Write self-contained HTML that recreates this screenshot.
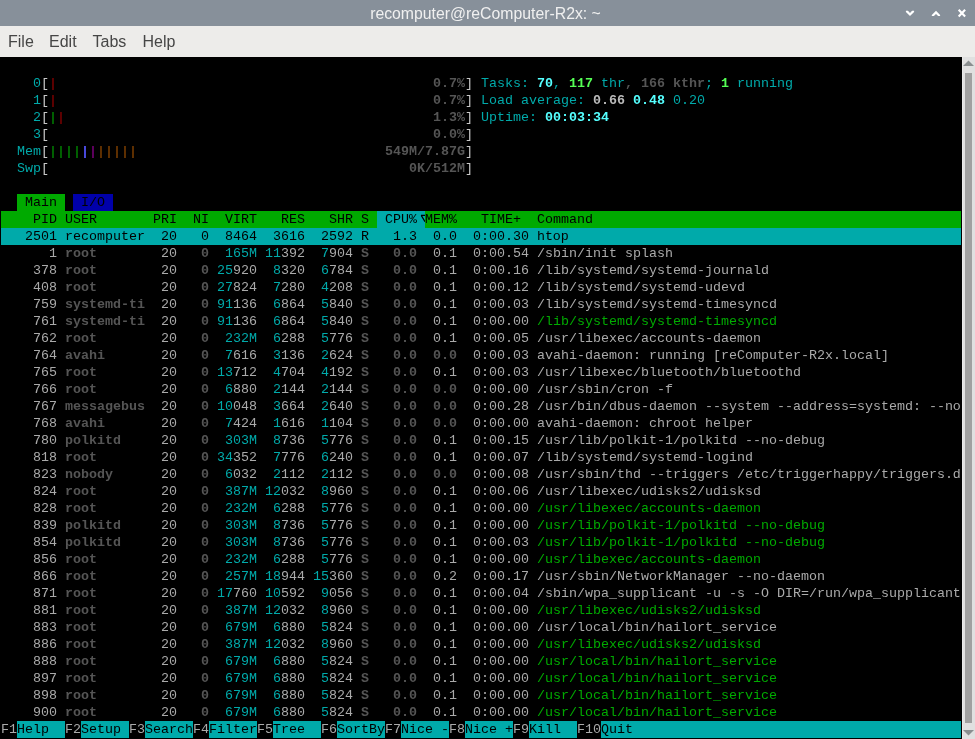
<!DOCTYPE html>
<html><head><meta charset="utf-8">
<style>
html,body{margin:0;padding:0;}
body{width:975px;height:739px;position:relative;overflow:hidden;background:#000;}
#wrap{position:absolute;left:0;top:0;width:975px;height:739px;will-change:transform;}
#title{position:absolute;left:0;top:0;width:975px;height:26px;background:#87909a;}
#title .t{position:absolute;left:-2px;width:975px;top:1px;height:26px;line-height:26px;text-align:center;color:#f0f0f0;font-family:"Liberation Sans",sans-serif;font-size:15.8px;}
#menu{position:absolute;left:0;top:26px;width:975px;height:31px;background:#edecea;font-family:"Liberation Sans",sans-serif;font-size:16px;color:#464646;}
#menu span{position:absolute;top:0px;line-height:31px;}
#term{position:absolute;left:0;top:57px;width:962px;height:682px;background:#000;}
#sb{position:absolute;left:962px;top:57px;width:13px;height:682px;background:#e0e0e0;border-left:1px solid #e8e8e8;box-sizing:border-box;}
#rows{position:absolute;left:0;top:0;width:962px;height:739px;will-change:transform;}
.r{position:absolute;left:1px;height:17px;line-height:17px;white-space:pre;font-family:"Liberation Mono",monospace;font-size:13.3333px;color:#aaaaaa;}
.w{color:#aaaaaa}
.W{color:#ffffff;font-weight:bold}
.br{color:#c8c8c8}
.Wg{color:#bbbbbb;font-weight:bold}
.r span{display:inline-block;height:17px;vertical-align:top}
.r span.tri{width:8px;overflow:visible;font-family:"Liberation Sans",sans-serif}
.k{color:#555555;font-weight:bold}
.c{color:#00aaaa}
.C{color:#55ffff;font-weight:bold}
.g{color:#00aa00}
.G{color:#55ff55;font-weight:bold}

.rd{color:#aa0000}
.B{color:#5555ff;font-weight:bold}
.m{color:#aa00aa}
.y{color:#aa5500}
.bg{background:#00aa00;color:#000}
.bc{background:#00aaaa;color:#000}
.bb{background:#0000aa;color:#000}
</style></head><body><div id="wrap">
<div id="title"><div class="t">recomputer@reComputer-R2x: ~</div>
<svg style="position:absolute;left:0;top:0" width="975" height="26">
<polygon points="905.9,10.8 907.9,10.8 910,12.9 912.1,10.8 914.1,10.8 914.1,12 910,16 905.9,11.9" fill="#fff"/>
<polygon points="931.8,16 933.9,16 936,13.9 938.1,16 940.1,16 940.1,14.9 936,10.8 931.8,14.9" fill="#fff"/>
<path d="M959.4 10.5 L964.4 15.7 M964.4 10.5 L959.4 15.7" stroke="#fff" stroke-width="2.1" stroke-linecap="square" fill="none"/>
</svg></div>
<div id="menu"><span style="left:8px">File</span><span style="left:49px">Edit</span><span style="left:92.5px">Tabs</span><span style="left:142.5px">Help</span></div>
<div id="term">
</div>
<div id="rows">
<div class="r" style="top:75px"><span class="c">    0</span><span class="br">[</span><span class="rd">|</span><span class="w">                                               </span><span class="k">0.7%</span><span class="br">]</span><span class="w"> </span><span class="c">Tasks: </span><span class="C">70</span><span class="c">, </span><span class="G">117</span><span class="c"> thr</span><span class="k">, 166 kthr</span><span class="c">; </span><span class="G">1</span><span class="c"> running</span></div>
<div class="r" style="top:92px"><span class="c">    1</span><span class="br">[</span><span class="rd">|</span><span class="w">                                               </span><span class="k">0.7%</span><span class="br">]</span><span class="w"> </span><span class="c">Load average: </span><span class="Wg">0.66 </span><span class="C">0.48 </span><span class="c">0.20</span></div>
<div class="r" style="top:109px"><span class="c">    2</span><span class="br">[</span><span class="g">|</span><span class="rd">|</span><span class="w">                                              </span><span class="k">1.3%</span><span class="br">]</span><span class="w"> </span><span class="c">Uptime: </span><span class="C">00:03:34</span></div>
<div class="r" style="top:126px"><span class="c">    3</span><span class="br">[</span><span class="w">                                                </span><span class="k">0.0%</span><span class="br">]</span><span class="w"> </span></div>
<div class="r" style="top:143px"><span class="c">  Mem</span><span class="br">[</span><span class="g">||||</span><span class="B">|</span><span class="m">|</span><span class="y">|||||</span><span class="w">                               </span><span class="k">549M/7.87G</span><span class="br">]</span><span class="w"> </span></div>
<div class="r" style="top:160px"><span class="c">  Swp</span><span class="br">[</span><span class="w">                                             </span><span class="k">0K/512M</span><span class="br">]</span><span class="w"> </span></div>
<div class="r" style="top:194px"><span class="w">  </span><span class="bg"> Main </span><span class="w"> </span><span class="bb"> I/O </span></div>
<div class="r" style="top:211px"><span class="bg">    PID USER       PRI  NI  VIRT   RES   SHR S </span><span class="bc"> CPU%</span><span class="bc tri"><svg width="8" height="17" style="display:block"><path d="M4 4.4 L8 4.4 M4.2 4.4 L8 10.8" stroke="#000" stroke-width="1.2" fill="none"/></svg></span><span class="bg">MEM%   TIME+  Command                                              </span></div>
<div class="r" style="top:228px"><span class="bc">   2501 recomputer  20   0  8464  3616  2592 R   1.3  0.0  0:00.30 htop                                                 </span></div>
<div class="r" style="top:245px"><span class="w">      1 </span><span class="k">root      </span><span class="w">  20 </span><span class="k">  0</span><span class="w"> </span><span class="w"> </span><span class="c">165M</span><span class="w"> </span><span class="c">11</span><span class="w">392</span><span class="w"> </span><span class="w"> </span><span class="c">7</span><span class="w">904</span><span class="w"> </span><span class="k">S</span><span class="w"> </span><span class="k">  0.0</span><span class="w"> </span><span class="w"> 0.1</span><span class="w"> </span><span class="w"> 0:00.54 </span><span class="w">/sbin/init splash</span></div>
<div class="r" style="top:262px"><span class="w">    378 </span><span class="k">root      </span><span class="w">  20 </span><span class="k">  0</span><span class="w"> </span><span class="c">25</span><span class="w">920</span><span class="w"> </span><span class="w"> </span><span class="c">8</span><span class="w">320</span><span class="w"> </span><span class="w"> </span><span class="c">6</span><span class="w">784</span><span class="w"> </span><span class="k">S</span><span class="w"> </span><span class="k">  0.0</span><span class="w"> </span><span class="w"> 0.1</span><span class="w"> </span><span class="w"> 0:00.16 </span><span class="w">/lib/systemd/systemd-journald</span></div>
<div class="r" style="top:279px"><span class="w">    408 </span><span class="k">root      </span><span class="w">  20 </span><span class="k">  0</span><span class="w"> </span><span class="c">27</span><span class="w">824</span><span class="w"> </span><span class="w"> </span><span class="c">7</span><span class="w">280</span><span class="w"> </span><span class="w"> </span><span class="c">4</span><span class="w">208</span><span class="w"> </span><span class="k">S</span><span class="w"> </span><span class="k">  0.0</span><span class="w"> </span><span class="w"> 0.1</span><span class="w"> </span><span class="w"> 0:00.12 </span><span class="w">/lib/systemd/systemd-udevd</span></div>
<div class="r" style="top:296px"><span class="w">    759 </span><span class="k">systemd-ti</span><span class="w">  20 </span><span class="k">  0</span><span class="w"> </span><span class="c">91</span><span class="w">136</span><span class="w"> </span><span class="w"> </span><span class="c">6</span><span class="w">864</span><span class="w"> </span><span class="w"> </span><span class="c">5</span><span class="w">840</span><span class="w"> </span><span class="k">S</span><span class="w"> </span><span class="k">  0.0</span><span class="w"> </span><span class="w"> 0.1</span><span class="w"> </span><span class="w"> 0:00.03 </span><span class="w">/lib/systemd/systemd-timesyncd</span></div>
<div class="r" style="top:313px"><span class="w">    761 </span><span class="k">systemd-ti</span><span class="w">  20 </span><span class="k">  0</span><span class="w"> </span><span class="c">91</span><span class="w">136</span><span class="w"> </span><span class="w"> </span><span class="c">6</span><span class="w">864</span><span class="w"> </span><span class="w"> </span><span class="c">5</span><span class="w">840</span><span class="w"> </span><span class="k">S</span><span class="w"> </span><span class="k">  0.0</span><span class="w"> </span><span class="w"> 0.1</span><span class="w"> </span><span class="w"> 0:00.00 </span><span class="g">/lib/systemd/systemd-timesyncd</span></div>
<div class="r" style="top:330px"><span class="w">    762 </span><span class="k">root      </span><span class="w">  20 </span><span class="k">  0</span><span class="w"> </span><span class="w"> </span><span class="c">232M</span><span class="w"> </span><span class="w"> </span><span class="c">6</span><span class="w">288</span><span class="w"> </span><span class="w"> </span><span class="c">5</span><span class="w">776</span><span class="w"> </span><span class="k">S</span><span class="w"> </span><span class="k">  0.0</span><span class="w"> </span><span class="w"> 0.1</span><span class="w"> </span><span class="w"> 0:00.05 </span><span class="w">/usr/libexec/accounts-daemon</span></div>
<div class="r" style="top:347px"><span class="w">    764 </span><span class="k">avahi     </span><span class="w">  20 </span><span class="k">  0</span><span class="w"> </span><span class="w"> </span><span class="c">7</span><span class="w">616</span><span class="w"> </span><span class="w"> </span><span class="c">3</span><span class="w">136</span><span class="w"> </span><span class="w"> </span><span class="c">2</span><span class="w">624</span><span class="w"> </span><span class="k">S</span><span class="w"> </span><span class="k">  0.0</span><span class="w"> </span><span class="k"> 0.0</span><span class="w"> </span><span class="w"> 0:00.03 </span><span class="w">avahi-daemon: running [reComputer-R2x.local]</span></div>
<div class="r" style="top:364px"><span class="w">    765 </span><span class="k">root      </span><span class="w">  20 </span><span class="k">  0</span><span class="w"> </span><span class="c">13</span><span class="w">712</span><span class="w"> </span><span class="w"> </span><span class="c">4</span><span class="w">704</span><span class="w"> </span><span class="w"> </span><span class="c">4</span><span class="w">192</span><span class="w"> </span><span class="k">S</span><span class="w"> </span><span class="k">  0.0</span><span class="w"> </span><span class="w"> 0.1</span><span class="w"> </span><span class="w"> 0:00.03 </span><span class="w">/usr/libexec/bluetooth/bluetoothd</span></div>
<div class="r" style="top:381px"><span class="w">    766 </span><span class="k">root      </span><span class="w">  20 </span><span class="k">  0</span><span class="w"> </span><span class="w"> </span><span class="c">6</span><span class="w">880</span><span class="w"> </span><span class="w"> </span><span class="c">2</span><span class="w">144</span><span class="w"> </span><span class="w"> </span><span class="c">2</span><span class="w">144</span><span class="w"> </span><span class="k">S</span><span class="w"> </span><span class="k">  0.0</span><span class="w"> </span><span class="k"> 0.0</span><span class="w"> </span><span class="w"> 0:00.00 </span><span class="w">/usr/sbin/cron -f</span></div>
<div class="r" style="top:398px"><span class="w">    767 </span><span class="k">messagebus</span><span class="w">  20 </span><span class="k">  0</span><span class="w"> </span><span class="c">10</span><span class="w">048</span><span class="w"> </span><span class="w"> </span><span class="c">3</span><span class="w">664</span><span class="w"> </span><span class="w"> </span><span class="c">2</span><span class="w">640</span><span class="w"> </span><span class="k">S</span><span class="w"> </span><span class="k">  0.0</span><span class="w"> </span><span class="k"> 0.0</span><span class="w"> </span><span class="w"> 0:00.28 </span><span class="w">/usr/bin/dbus-daemon --system --address=systemd: --no</span></div>
<div class="r" style="top:415px"><span class="w">    768 </span><span class="k">avahi     </span><span class="w">  20 </span><span class="k">  0</span><span class="w"> </span><span class="w"> </span><span class="c">7</span><span class="w">424</span><span class="w"> </span><span class="w"> </span><span class="c">1</span><span class="w">616</span><span class="w"> </span><span class="w"> </span><span class="c">1</span><span class="w">104</span><span class="w"> </span><span class="k">S</span><span class="w"> </span><span class="k">  0.0</span><span class="w"> </span><span class="k"> 0.0</span><span class="w"> </span><span class="w"> 0:00.00 </span><span class="w">avahi-daemon: chroot helper</span></div>
<div class="r" style="top:432px"><span class="w">    780 </span><span class="k">polkitd   </span><span class="w">  20 </span><span class="k">  0</span><span class="w"> </span><span class="w"> </span><span class="c">303M</span><span class="w"> </span><span class="w"> </span><span class="c">8</span><span class="w">736</span><span class="w"> </span><span class="w"> </span><span class="c">5</span><span class="w">776</span><span class="w"> </span><span class="k">S</span><span class="w"> </span><span class="k">  0.0</span><span class="w"> </span><span class="w"> 0.1</span><span class="w"> </span><span class="w"> 0:00.15 </span><span class="w">/usr/lib/polkit-1/polkitd --no-debug</span></div>
<div class="r" style="top:449px"><span class="w">    818 </span><span class="k">root      </span><span class="w">  20 </span><span class="k">  0</span><span class="w"> </span><span class="c">34</span><span class="w">352</span><span class="w"> </span><span class="w"> </span><span class="c">7</span><span class="w">776</span><span class="w"> </span><span class="w"> </span><span class="c">6</span><span class="w">240</span><span class="w"> </span><span class="k">S</span><span class="w"> </span><span class="k">  0.0</span><span class="w"> </span><span class="w"> 0.1</span><span class="w"> </span><span class="w"> 0:00.07 </span><span class="w">/lib/systemd/systemd-logind</span></div>
<div class="r" style="top:466px"><span class="w">    823 </span><span class="k">nobody    </span><span class="w">  20 </span><span class="k">  0</span><span class="w"> </span><span class="w"> </span><span class="c">6</span><span class="w">032</span><span class="w"> </span><span class="w"> </span><span class="c">2</span><span class="w">112</span><span class="w"> </span><span class="w"> </span><span class="c">2</span><span class="w">112</span><span class="w"> </span><span class="k">S</span><span class="w"> </span><span class="k">  0.0</span><span class="w"> </span><span class="k"> 0.0</span><span class="w"> </span><span class="w"> 0:00.08 </span><span class="w">/usr/sbin/thd --triggers /etc/triggerhappy/triggers.d</span></div>
<div class="r" style="top:483px"><span class="w">    824 </span><span class="k">root      </span><span class="w">  20 </span><span class="k">  0</span><span class="w"> </span><span class="w"> </span><span class="c">387M</span><span class="w"> </span><span class="c">12</span><span class="w">032</span><span class="w"> </span><span class="w"> </span><span class="c">8</span><span class="w">960</span><span class="w"> </span><span class="k">S</span><span class="w"> </span><span class="k">  0.0</span><span class="w"> </span><span class="w"> 0.1</span><span class="w"> </span><span class="w"> 0:00.06 </span><span class="w">/usr/libexec/udisks2/udisksd</span></div>
<div class="r" style="top:500px"><span class="w">    828 </span><span class="k">root      </span><span class="w">  20 </span><span class="k">  0</span><span class="w"> </span><span class="w"> </span><span class="c">232M</span><span class="w"> </span><span class="w"> </span><span class="c">6</span><span class="w">288</span><span class="w"> </span><span class="w"> </span><span class="c">5</span><span class="w">776</span><span class="w"> </span><span class="k">S</span><span class="w"> </span><span class="k">  0.0</span><span class="w"> </span><span class="w"> 0.1</span><span class="w"> </span><span class="w"> 0:00.00 </span><span class="g">/usr/libexec/accounts-daemon</span></div>
<div class="r" style="top:517px"><span class="w">    839 </span><span class="k">polkitd   </span><span class="w">  20 </span><span class="k">  0</span><span class="w"> </span><span class="w"> </span><span class="c">303M</span><span class="w"> </span><span class="w"> </span><span class="c">8</span><span class="w">736</span><span class="w"> </span><span class="w"> </span><span class="c">5</span><span class="w">776</span><span class="w"> </span><span class="k">S</span><span class="w"> </span><span class="k">  0.0</span><span class="w"> </span><span class="w"> 0.1</span><span class="w"> </span><span class="w"> 0:00.00 </span><span class="g">/usr/lib/polkit-1/polkitd --no-debug</span></div>
<div class="r" style="top:534px"><span class="w">    854 </span><span class="k">polkitd   </span><span class="w">  20 </span><span class="k">  0</span><span class="w"> </span><span class="w"> </span><span class="c">303M</span><span class="w"> </span><span class="w"> </span><span class="c">8</span><span class="w">736</span><span class="w"> </span><span class="w"> </span><span class="c">5</span><span class="w">776</span><span class="w"> </span><span class="k">S</span><span class="w"> </span><span class="k">  0.0</span><span class="w"> </span><span class="w"> 0.1</span><span class="w"> </span><span class="w"> 0:00.03 </span><span class="g">/usr/lib/polkit-1/polkitd --no-debug</span></div>
<div class="r" style="top:551px"><span class="w">    856 </span><span class="k">root      </span><span class="w">  20 </span><span class="k">  0</span><span class="w"> </span><span class="w"> </span><span class="c">232M</span><span class="w"> </span><span class="w"> </span><span class="c">6</span><span class="w">288</span><span class="w"> </span><span class="w"> </span><span class="c">5</span><span class="w">776</span><span class="w"> </span><span class="k">S</span><span class="w"> </span><span class="k">  0.0</span><span class="w"> </span><span class="w"> 0.1</span><span class="w"> </span><span class="w"> 0:00.00 </span><span class="g">/usr/libexec/accounts-daemon</span></div>
<div class="r" style="top:568px"><span class="w">    866 </span><span class="k">root      </span><span class="w">  20 </span><span class="k">  0</span><span class="w"> </span><span class="w"> </span><span class="c">257M</span><span class="w"> </span><span class="c">18</span><span class="w">944</span><span class="w"> </span><span class="c">15</span><span class="w">360</span><span class="w"> </span><span class="k">S</span><span class="w"> </span><span class="k">  0.0</span><span class="w"> </span><span class="w"> 0.2</span><span class="w"> </span><span class="w"> 0:00.17 </span><span class="w">/usr/sbin/NetworkManager --no-daemon</span></div>
<div class="r" style="top:585px"><span class="w">    871 </span><span class="k">root      </span><span class="w">  20 </span><span class="k">  0</span><span class="w"> </span><span class="c">17</span><span class="w">760</span><span class="w"> </span><span class="c">10</span><span class="w">592</span><span class="w"> </span><span class="w"> </span><span class="c">9</span><span class="w">056</span><span class="w"> </span><span class="k">S</span><span class="w"> </span><span class="k">  0.0</span><span class="w"> </span><span class="w"> 0.1</span><span class="w"> </span><span class="w"> 0:00.04 </span><span class="w">/sbin/wpa_supplicant -u -s -O DIR=/run/wpa_supplicant</span></div>
<div class="r" style="top:602px"><span class="w">    881 </span><span class="k">root      </span><span class="w">  20 </span><span class="k">  0</span><span class="w"> </span><span class="w"> </span><span class="c">387M</span><span class="w"> </span><span class="c">12</span><span class="w">032</span><span class="w"> </span><span class="w"> </span><span class="c">8</span><span class="w">960</span><span class="w"> </span><span class="k">S</span><span class="w"> </span><span class="k">  0.0</span><span class="w"> </span><span class="w"> 0.1</span><span class="w"> </span><span class="w"> 0:00.00 </span><span class="g">/usr/libexec/udisks2/udisksd</span></div>
<div class="r" style="top:619px"><span class="w">    883 </span><span class="k">root      </span><span class="w">  20 </span><span class="k">  0</span><span class="w"> </span><span class="w"> </span><span class="c">679M</span><span class="w"> </span><span class="w"> </span><span class="c">6</span><span class="w">880</span><span class="w"> </span><span class="w"> </span><span class="c">5</span><span class="w">824</span><span class="w"> </span><span class="k">S</span><span class="w"> </span><span class="k">  0.0</span><span class="w"> </span><span class="w"> 0.1</span><span class="w"> </span><span class="w"> 0:00.00 </span><span class="w">/usr/local/bin/hailort_service</span></div>
<div class="r" style="top:636px"><span class="w">    886 </span><span class="k">root      </span><span class="w">  20 </span><span class="k">  0</span><span class="w"> </span><span class="w"> </span><span class="c">387M</span><span class="w"> </span><span class="c">12</span><span class="w">032</span><span class="w"> </span><span class="w"> </span><span class="c">8</span><span class="w">960</span><span class="w"> </span><span class="k">S</span><span class="w"> </span><span class="k">  0.0</span><span class="w"> </span><span class="w"> 0.1</span><span class="w"> </span><span class="w"> 0:00.00 </span><span class="g">/usr/libexec/udisks2/udisksd</span></div>
<div class="r" style="top:653px"><span class="w">    888 </span><span class="k">root      </span><span class="w">  20 </span><span class="k">  0</span><span class="w"> </span><span class="w"> </span><span class="c">679M</span><span class="w"> </span><span class="w"> </span><span class="c">6</span><span class="w">880</span><span class="w"> </span><span class="w"> </span><span class="c">5</span><span class="w">824</span><span class="w"> </span><span class="k">S</span><span class="w"> </span><span class="k">  0.0</span><span class="w"> </span><span class="w"> 0.1</span><span class="w"> </span><span class="w"> 0:00.00 </span><span class="g">/usr/local/bin/hailort_service</span></div>
<div class="r" style="top:670px"><span class="w">    897 </span><span class="k">root      </span><span class="w">  20 </span><span class="k">  0</span><span class="w"> </span><span class="w"> </span><span class="c">679M</span><span class="w"> </span><span class="w"> </span><span class="c">6</span><span class="w">880</span><span class="w"> </span><span class="w"> </span><span class="c">5</span><span class="w">824</span><span class="w"> </span><span class="k">S</span><span class="w"> </span><span class="k">  0.0</span><span class="w"> </span><span class="w"> 0.1</span><span class="w"> </span><span class="w"> 0:00.00 </span><span class="g">/usr/local/bin/hailort_service</span></div>
<div class="r" style="top:687px"><span class="w">    898 </span><span class="k">root      </span><span class="w">  20 </span><span class="k">  0</span><span class="w"> </span><span class="w"> </span><span class="c">679M</span><span class="w"> </span><span class="w"> </span><span class="c">6</span><span class="w">880</span><span class="w"> </span><span class="w"> </span><span class="c">5</span><span class="w">824</span><span class="w"> </span><span class="k">S</span><span class="w"> </span><span class="k">  0.0</span><span class="w"> </span><span class="w"> 0.1</span><span class="w"> </span><span class="w"> 0:00.00 </span><span class="g">/usr/local/bin/hailort_service</span></div>
<div class="r" style="top:704px"><span class="w">    900 </span><span class="k">root      </span><span class="w">  20 </span><span class="k">  0</span><span class="w"> </span><span class="w"> </span><span class="c">679M</span><span class="w"> </span><span class="w"> </span><span class="c">6</span><span class="w">880</span><span class="w"> </span><span class="w"> </span><span class="c">5</span><span class="w">824</span><span class="w"> </span><span class="k">S</span><span class="w"> </span><span class="k">  0.0</span><span class="w"> </span><span class="w"> 0.1</span><span class="w"> </span><span class="w"> 0:00.00 </span><span class="g">/usr/local/bin/hailort_service</span></div>
<div class="r" style="top:721px"><span class="w">F1</span><span class="bc">Help  </span><span class="w">F2</span><span class="bc">Setup </span><span class="w">F3</span><span class="bc">Search</span><span class="w">F4</span><span class="bc">Filter</span><span class="w">F5</span><span class="bc">Tree  </span><span class="w">F6</span><span class="bc">SortBy</span><span class="w">F7</span><span class="bc">Nice -</span><span class="w">F8</span><span class="bc">Nice +</span><span class="w">F9</span><span class="bc">Kill  </span><span class="w">F10</span><span class="bc">Quit  </span><span class="bc">                                       </span></div>
</div>
<div id="sb">
<svg style="position:absolute;left:-1px;top:0" width="13" height="682">
<path d="M1 9 L6.5 3.4 L12 9 Z" fill="#8a8e8f"/>
<rect x="3" y="16" width="7" height="650" fill="#a0a0a0"/>
<path d="M1 673 L6.5 678.6 L12 673 Z" fill="#8a8e8f"/>
</svg>
</div>
</div></body></html>
